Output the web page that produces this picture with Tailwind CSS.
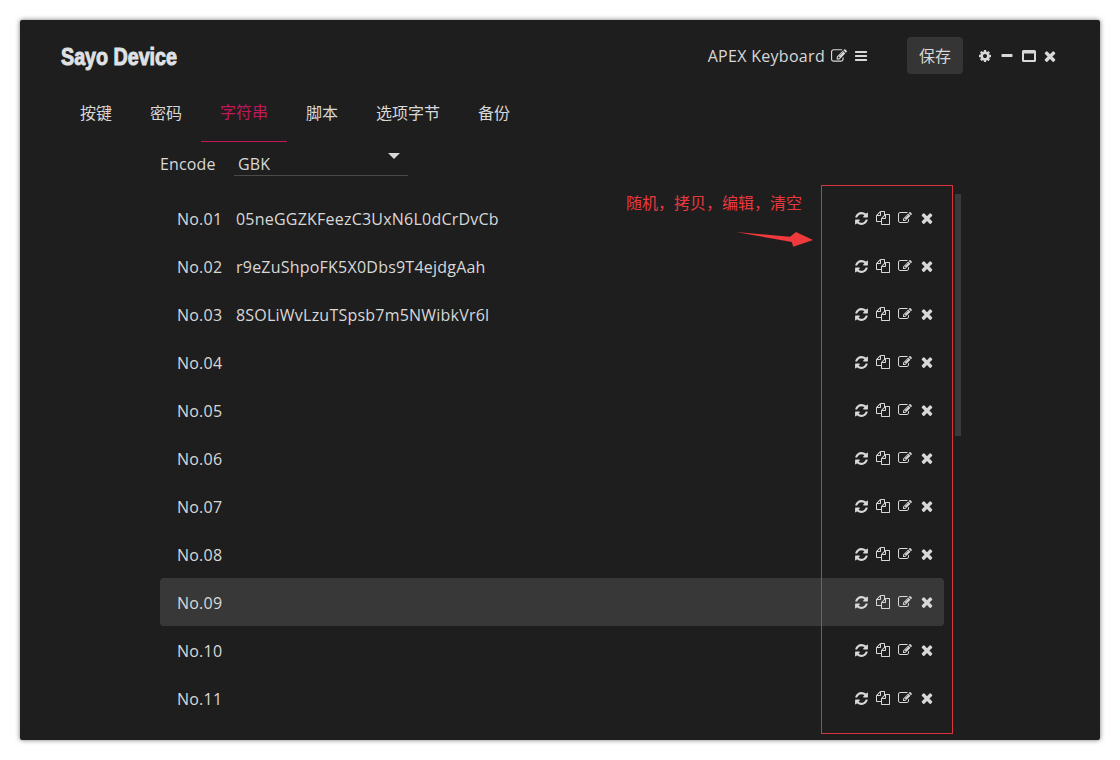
<!DOCTYPE html>
<html lang="zh">
<head>
<meta charset="utf-8">
<title>Sayo Device</title>
<script src="https://cdn.jsdelivr.net/npm/@tailwindcss/browser@4"></script>
</head>
<body class="bg-white font-['Open_Sans','Noto_Sans_CJK_SC',sans-serif] text-[16px] text-[#d8d8d8]">
<svg class="hidden" xmlns="http://www.w3.org/2000/svg">
<symbol id="refresh" viewBox="0 0 1792 1792"><path fill="currentColor" d="M1639 1056q0 5-1 7-64 268-268 434.5t-478 166.5q-146 0-282.5-55t-243.5-157l-129 129q-19 19-45 19t-45-19-19-45v-448q0-26 19-45t45-19h448q26 0 45 19t19 45-19 45l-137 137q71 66 161 102t187 36q134 0 250-65t186-179q11-17 53-117 8-23 30-23h192q13 0 22.5 9.5t9.5 22.5zm25-800v448q0 26-19 45t-45 19h-448q-26 0-45-19t-19-45 19-45l138-138q-148-137-349-137-134 0-250 65t-186 179q-11 17-53 117-8 23-30 23h-199q-13 0-22.5-9.5t-9.5-22.5v-7q65-268 270-434.5t480-166.5q146 0 284 55.5t245 156.5l130-129q19-19 45-19t45 19 19 45z"/></symbol>
<symbol id="files" viewBox="0 0 1792 1792"><path fill="currentColor" d="M1696 384q40 0 68 28t28 68v1216q0 40-28 68t-68 28h-960q-40 0-68-28t-28-68v-288h-544q-40 0-68-28t-28-68v-672q0-40 20-88t48-76l408-408q28-28 76-48t88-20h416q40 0 68 28t28 68v328q68-40 128-40h416zm-544 213l-299 299h299v-299zm-640-384l-299 299h299v-299zm196 647l316-316v-416h-384v416q0 40-28 68t-68 28h-416v640h512v-256q0-40 20-88t48-76zm956 804v-1152h-384v416q0 40-28 68t-68 28h-416v640h896z"/></symbol>
<symbol id="edit" viewBox="0 0 1792 1792"><path fill="currentColor" d="M888 1184l116-116-152-152-116 116v56h96v96h56zm440-720q-16-16-33 1l-350 350q-17 17-1 33t33-1l350-350q17-17 1-33zm80 594v190q0 119-84.5 203.5t-203.5 84.5h-832q-119 0-203.5-84.5t-84.5-203.5v-832q0-119 84.5-203.5t203.5-84.5h832q63 0 117 25 15 7 18 23 3 17-9 29l-49 49q-14 14-32 8-23-6-45-6h-832q-66 0-113 47t-47 113v832q0 66 47 113t113 47h832q66 0 113-47t47-113v-126q0-13 9-22l64-64q15-15 35-7t20 29zm-96-738l288 288-672 672h-288v-288zm444 132l-92 92-288-288 92-92q28-28 68-28t68 28l152 152q28 28 28 68t-28 68z"/></symbol>
<symbol id="times" viewBox="0 0 1792 1792"><path fill="currentColor" d="M1490 1322q0 40-28 68l-136 136q-28 28-68 28t-68-28l-294-294-294 294q-28 28-68 28t-68-28l-136-136q-28-28-28-68t28-68l294-294-294-294q-28-28-28-68t28-68l136-136q28-28 68-28t68 28l294 294 294-294q28-28 68-28t68 28l136 136q28 28 28 68t-28 68l-294 294 294 294q28 28 28 68z"/></symbol>
<symbol id="bars" viewBox="0 0 1792 1792"><path fill="currentColor" d="M1664 1344v128q0 26-19 45t-45 19h-1408q-26 0-45-19t-19-45v-128q0-26 19-45t45-19h1408q26 0 45 19t19 45zm0-512v128q0 26-19 45t-45 19h-1408q-26 0-45-19t-19-45v-128q0-26 19-45t45-19h1408q26 0 45 19t19 45zm0-512v128q0 26-19 45t-45 19h-1408q-26 0-45-19t-19-45v-128q0-26 19-45t45-19h1408q26 0 45 19t19 45z"/></symbol>
<symbol id="minus" viewBox="0 0 1792 1792"><path fill="currentColor" d="M1600 736v192q0 40-28 68t-68 28h-1216q-40 0-68-28t-28-68v-192q0-40 28-68t68-28h1216q40 0 68 28t28 68z"/></symbol>
<symbol id="cog" viewBox="0 0 1792 1792"><path fill="currentColor" d="M1152 896q0-106-75-181t-181-75-181 75-75 181 75 181 181 75 181-75 75-181zm512-109v222q0 12-8 23t-20 13l-185 28q-19 54-39 91 35 50 107 138 10 12 10 25t-9 23q-27 37-99 108t-94 71q-12 0-26-9l-138-108q-44 23-91 38-16 136-29 186-7 28-36 28h-222q-14 0-24.5-8.5t-11.5-21.5l-28-184q-49-16-90-37l-141 107q-10 9-25 9-14 0-25-11-126-114-165-168-7-10-7-23 0-12 8-23 15-21 51-66.5t54-70.5q-27-50-41-99l-183-27q-13-2-21-12.5t-8-23.5v-222q0-12 8-23t19-13l186-28q14-46 39-92-40-57-107-138-10-12-10-24 0-10 9-23 26-36 98.5-107.5t94.5-71.5q13 0 26 10l138 107q44-23 91-38 16-136 29-186 7-28 36-28h222q14 0 24.5 8.5t11.5 21.5l28 184q49 16 90 37l142-107q9-9 24-9 13 0 25 10 129 119 165 170 7 8 7 22 0 12-8 23-15 21-51 66.5t-54 70.5q26 50 41 98l183 28q13 2 21 12.5t8 23.5z"/></symbol>
</svg>

<div class="p-5">
<div class="relative h-[720px] w-[1080px] overflow-hidden rounded-[2px] bg-[#1f1e1e] shadow-[0_0_5px_rgba(0,0,0,0.55)]">

  <header class="flex h-[54px] items-end pl-[41px] pr-[42px]">
    <div class="flex h-[37px] w-full items-center">
      <div class="origin-left scale-x-[0.82] pt-[2px] font-['Liberation_Sans',sans-serif] text-[24px] font-bold leading-none whitespace-nowrap text-[#dfe1e4] [-webkit-text-stroke:1px_#dfe1e4]">Sayo Device</div>
      <div class="ml-auto flex items-center">
        <span class="pt-[1px] text-[16px] leading-none tracking-[0.3px]">APEX Keyboard</span>
        <svg class="ml-[6px] h-[16px] w-[16px]"><use href="#edit"/></svg>
        <svg class="ml-[7px] h-[14px] w-[14px]"><use href="#bars"/></svg>
      </div>
      <button class="ml-[39px] h-[37px] w-[56px] rounded-[4px] bg-[#353535] text-[16px] text-[#d8d8d8]">保存</button>
      <div class="ml-[15px] flex items-center">
        <svg class="h-[14px] w-[14px]"><use href="#cog"/></svg>
        <svg class="ml-[8px] h-[14px] w-[14px]"><use href="#minus"/></svg>
        <svg class="ml-[8px] h-[12px] w-[14px]" viewBox="0 0 14 12"><path fill="currentColor" fill-rule="evenodd" d="M1.5 0h11A1.5 1.5 0 0 1 14 1.5v9a1.5 1.5 0 0 1-1.5 1.5h-11A1.5 1.5 0 0 1 0 10.500v-9A1.500 1.500 0 0 1 1.500 0zM2 3.500V10h10V3.500z"/></svg>
        <svg class="ml-[6px] h-[16px] w-[16px]"><use href="#times"/></svg>
      </div>
    </div>
  </header>

  <nav class="mt-[11px] flex h-[57px] pl-[41px]">
    <a class="flex items-center px-[19px] pb-[2px]">按键</a>
    <a class="flex items-center px-[19px] pb-[2px]">密码</a>
    <a class="flex items-center border-b border-[#c2185b] px-[19px] pb-[2px] text-[#c2185b]">字符串</a>
    <a class="flex items-center px-[19px] pb-[2px]">脚本</a>
    <a class="flex items-center px-[19px] pb-[2px]">选项字节</a>
    <a class="flex items-center px-[19px] pb-[2px]">备份</a>
  </nav>

  <div class="flex h-[52px] pl-[140px] pt-[9px]">
    <span class="w-[56px] leading-[26px] tracking-[0.15px]">Encode</span>
    <div class="relative ml-[18px] h-[25px] w-[174px] border-b border-[#4a4a4a] pl-[4px] leading-[26px] tracking-[0.2px]">
      GBK
      <span class="absolute right-[8px] top-[2px] h-0 w-0 border-x-[6px] border-t-[6px] border-x-transparent border-t-[#d8d8d8]"></span>
    </div>
  </div>

  <div class="flex pl-[140px]">
    <ul class="w-[784px] tracking-[0.22px]">
      <li class="flex h-12 items-center rounded-[4px] pl-[17px] pr-[6px]"><span class="w-[59px] pt-[2px]">No.01</span><span class="pt-[2px]">05neGGZKFeezC3UxN6L0dCrDvCb</span><span class="ml-auto flex items-center"><svg class="mx-[3.5px] h-[15px] w-[15px]"><use href="#refresh"/></svg><svg class="mx-[4px] h-[14px] w-[14px]"><use href="#files"/></svg><svg class="mx-[4px] h-[14px] w-[14px]"><use href="#edit"/></svg><svg class="mx-[3px] h-4 w-4"><use href="#times"/></svg></span></li>
      <li class="flex h-12 items-center rounded-[4px] pl-[17px] pr-[6px]"><span class="w-[59px] pt-[2px]">No.02</span><span class="pt-[2px]">r9eZuShpoFK5X0Dbs9T4ejdgAah</span><span class="ml-auto flex items-center"><svg class="mx-[3.5px] h-[15px] w-[15px]"><use href="#refresh"/></svg><svg class="mx-[4px] h-[14px] w-[14px]"><use href="#files"/></svg><svg class="mx-[4px] h-[14px] w-[14px]"><use href="#edit"/></svg><svg class="mx-[3px] h-4 w-4"><use href="#times"/></svg></span></li>
      <li class="flex h-12 items-center rounded-[4px] pl-[17px] pr-[6px]"><span class="w-[59px] pt-[2px]">No.03</span><span class="pt-[2px]">8SOLiWvLzuTSpsb7m5NWibkVr6l</span><span class="ml-auto flex items-center"><svg class="mx-[3.5px] h-[15px] w-[15px]"><use href="#refresh"/></svg><svg class="mx-[4px] h-[14px] w-[14px]"><use href="#files"/></svg><svg class="mx-[4px] h-[14px] w-[14px]"><use href="#edit"/></svg><svg class="mx-[3px] h-4 w-4"><use href="#times"/></svg></span></li>
      <li class="flex h-12 items-center rounded-[4px] pl-[17px] pr-[6px]"><span class="w-[59px] pt-[2px]">No.04</span><span class="ml-auto flex items-center"><svg class="mx-[3.5px] h-[15px] w-[15px]"><use href="#refresh"/></svg><svg class="mx-[4px] h-[14px] w-[14px]"><use href="#files"/></svg><svg class="mx-[4px] h-[14px] w-[14px]"><use href="#edit"/></svg><svg class="mx-[3px] h-4 w-4"><use href="#times"/></svg></span></li>
      <li class="flex h-12 items-center rounded-[4px] pl-[17px] pr-[6px]"><span class="w-[59px] pt-[2px]">No.05</span><span class="ml-auto flex items-center"><svg class="mx-[3.5px] h-[15px] w-[15px]"><use href="#refresh"/></svg><svg class="mx-[4px] h-[14px] w-[14px]"><use href="#files"/></svg><svg class="mx-[4px] h-[14px] w-[14px]"><use href="#edit"/></svg><svg class="mx-[3px] h-4 w-4"><use href="#times"/></svg></span></li>
      <li class="flex h-12 items-center rounded-[4px] pl-[17px] pr-[6px]"><span class="w-[59px] pt-[2px]">No.06</span><span class="ml-auto flex items-center"><svg class="mx-[3.5px] h-[15px] w-[15px]"><use href="#refresh"/></svg><svg class="mx-[4px] h-[14px] w-[14px]"><use href="#files"/></svg><svg class="mx-[4px] h-[14px] w-[14px]"><use href="#edit"/></svg><svg class="mx-[3px] h-4 w-4"><use href="#times"/></svg></span></li>
      <li class="flex h-12 items-center rounded-[4px] pl-[17px] pr-[6px]"><span class="w-[59px] pt-[2px]">No.07</span><span class="ml-auto flex items-center"><svg class="mx-[3.5px] h-[15px] w-[15px]"><use href="#refresh"/></svg><svg class="mx-[4px] h-[14px] w-[14px]"><use href="#files"/></svg><svg class="mx-[4px] h-[14px] w-[14px]"><use href="#edit"/></svg><svg class="mx-[3px] h-4 w-4"><use href="#times"/></svg></span></li>
      <li class="flex h-12 items-center rounded-[4px] pl-[17px] pr-[6px]"><span class="w-[59px] pt-[2px]">No.08</span><span class="ml-auto flex items-center"><svg class="mx-[3.5px] h-[15px] w-[15px]"><use href="#refresh"/></svg><svg class="mx-[4px] h-[14px] w-[14px]"><use href="#files"/></svg><svg class="mx-[4px] h-[14px] w-[14px]"><use href="#edit"/></svg><svg class="mx-[3px] h-4 w-4"><use href="#times"/></svg></span></li>
      <li class="flex h-12 items-center rounded-[4px] bg-[#383838] pl-[17px] pr-[6px]"><span class="w-[59px] pt-[2px]">No.09</span><span class="ml-auto flex items-center"><svg class="mx-[3.5px] h-[15px] w-[15px]"><use href="#refresh"/></svg><svg class="mx-[4px] h-[14px] w-[14px]"><use href="#files"/></svg><svg class="mx-[4px] h-[14px] w-[14px]"><use href="#edit"/></svg><svg class="mx-[3px] h-4 w-4"><use href="#times"/></svg></span></li>
      <li class="flex h-12 items-center rounded-[4px] pl-[17px] pr-[6px]"><span class="w-[59px] pt-[2px]">No.10</span><span class="ml-auto flex items-center"><svg class="mx-[3.5px] h-[15px] w-[15px]"><use href="#refresh"/></svg><svg class="mx-[4px] h-[14px] w-[14px]"><use href="#files"/></svg><svg class="mx-[4px] h-[14px] w-[14px]"><use href="#edit"/></svg><svg class="mx-[3px] h-4 w-4"><use href="#times"/></svg></span></li>
      <li class="flex h-12 items-center rounded-[4px] pl-[17px] pr-[6px]"><span class="w-[59px] pt-[2px]">No.11</span><span class="ml-auto flex items-center"><svg class="mx-[3.5px] h-[15px] w-[15px]"><use href="#refresh"/></svg><svg class="mx-[4px] h-[14px] w-[14px]"><use href="#files"/></svg><svg class="mx-[4px] h-[14px] w-[14px]"><use href="#edit"/></svg><svg class="mx-[3px] h-4 w-4"><use href="#times"/></svg></span></li>
    </ul>
    <div class="ml-[11px] h-[242px] w-[6px] bg-[#3a3a3a]"></div>
  </div>

  <!-- annotation overlay -->
  <div class="absolute left-[801px] top-[165px] h-[549px] w-[132px] border border-[#d8343c]"></div>
  <span class="absolute left-[606px] top-[172px] text-[16px] leading-[22px] text-[#e8383d]">随机，拷贝，编辑，清空</span>
  <svg class="absolute left-[716px] top-[211px] h-[17px] w-[78px]" viewBox="0 0 78 17"><path fill="#ee3a3c" d="M0 1L54 5.800L60 1L77 9L57.300 15.700L55.700 11z"/></svg>
</div>
</div>
</body>
</html>
